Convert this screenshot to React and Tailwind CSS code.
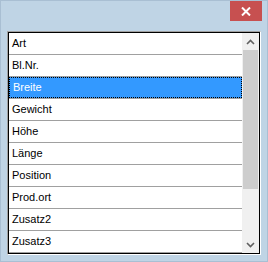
import React from "react";

const items = ["Art","Bl.Nr.","Breite","Gewicht","Höhe","Länge","Position","Prod.ort","Zusatz2","Zusatz3"];

export default function App() {
  return (
    <div className="w-[268px] h-[262px] bg-[#bfd4e5] border border-[#a9bfd3] relative overflow-hidden" style={{fontFamily: '"Liberation Sans", Arial, sans-serif'}}>
      <div className="absolute left-[229px] top-0 w-[32px] h-[20px] bg-[#c75050] flex items-center justify-center">
        <svg width="10" height="9" viewBox="0 0 10 9">
          <path d="M1 0.5 L9 8.5 M9 0.5 L1 8.5" stroke="#fff" strokeWidth="2" />
        </svg>
      </div>
      <div className="ml-[6px] mt-[30px] w-[254px] h-[224px] border-t border-l border-[#a0a0a0] border-r-[#ffffff] border-b-[#ffffff] border-r border-b">
        <div className="w-full h-full border border-black flex bg-white">
          <div className="flex-1 flex flex-col">
            {items.map((t, i) => (
              <div key={t} className={"h-[22px] border-b border-[#a0a0a0] flex items-center text-[11px] " + (i === 2 ? "bg-[#3399ff] text-white" : "text-black")}>
                <div className={"w-full h-full flex items-center pl-[3px] " + (i === 2 ? "border border-dotted border-black pl-[2px]" : "")}>{t}</div>
              </div>
            ))}
          </div>
          <div className="w-[17px] h-full bg-[#f0f0f0] flex flex-col">
            <div className="h-[17px] flex items-center justify-center">
              <svg width="9" height="6" viewBox="0 0 9 6"><path d="M1 5 L4.5 1.5 L8 5" stroke="#606060" strokeWidth="1.6" fill="none"/></svg>
            </div>
            <div className="mx-[1px] h-[139px] bg-[#cdcdcd]"></div>
            <div className="flex-1"></div>
            <div className="h-[17px] flex items-center justify-center">
              <svg width="9" height="6" viewBox="0 0 9 6"><path d="M1 1 L4.5 4.5 L8 1" stroke="#606060" strokeWidth="1.6" fill="none"/></svg>
            </div>
          </div>
        </div>
      </div>
    </div>
  );
}
